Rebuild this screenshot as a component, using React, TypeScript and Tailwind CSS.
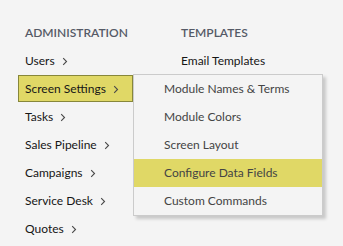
const adminItems = ['Users', 'Screen Settings', 'Tasks', 'Sales Pipeline', 'Campaigns', 'Service Desk', 'Quotes']
const screenSettings = ['Module Names & Terms', 'Module Colors', 'Screen Layout', 'Configure Data Fields', 'Custom Commands']

function Chevron() {
  return (
    <svg width="6" height="9" viewBox="0 0 6 9" className="ml-[7px] mt-[1px] shrink-0">
      <path d="M1.2 1.2l3.3 3.3-3.3 3.3" fill="none" stroke="#4a4a4a" strokeWidth="1.1" />
    </svg>
  )
}

function SubMenu() {
  return (
    <div className="absolute left-[115px] top-[-1px] z-10 w-[190px] border border-[#cbcbcb] bg-[#f4f4f4] shadow-[3px_3px_3px_rgba(0,0,0,0.18)]">
      {screenSettings.map((item) => (
        <div
          key={item}
          className={
            'flex h-[28px] items-center pl-[30px] text-[#444] ' +
            (item === 'Configure Data Fields' ? 'bg-[#e0d866]' : '')
          }
        >
          {item}
        </div>
      ))}
    </div>
  )
}

export default function App() {
  return (
    <div className="flex h-[246px] w-[343px] bg-[#f4f4f4] pl-[18px] pt-[19px] text-[12px] text-[#161616] [font-family:Lato,'Open_Sans',sans-serif]">
      <div className="w-[163px] shrink-0">
        <div className="flex h-[28px] items-center pl-[7px] font-semibold text-[#555a66]">ADMINISTRATION</div>
        {adminItems.map((item) => (
          <div key={item} className="relative h-[28px]">
            {item === 'Screen Settings' ? (
              <>
                <div className="flex h-[27px] w-[115px] items-center border border-[#87873a] bg-[#e0d866] pl-[6px]">
                  {item}
                  <Chevron />
                </div>
                <SubMenu />
              </>
            ) : (
              <div className="flex h-[28px] items-center pl-[7px]">
                {item}
                <Chevron />
              </div>
            )}
          </div>
        ))}
      </div>
      <div>
        <div className="flex h-[28px] items-center font-semibold text-[#555a66]">TEMPLATES</div>
        <div className="flex h-[28px] items-center">Email Templates</div>
      </div>
    </div>
  )
}
